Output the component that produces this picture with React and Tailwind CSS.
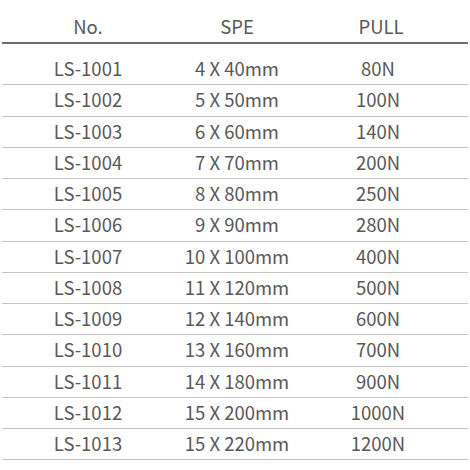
import React from 'react';

const rows = [
  ['LS-1001', '4 X 40mm', '80N'],
  ['LS-1002', '5 X 50mm', '100N'],
  ['LS-1003', '6 X 60mm', '140N'],
  ['LS-1004', '7 X 70mm', '200N'],
  ['LS-1005', '8 X 80mm', '250N'],
  ['LS-1006', '9 X 90mm', '280N'],
  ['LS-1007', '10 X 100mm', '400N'],
  ['LS-1008', '11 X 120mm', '500N'],
  ['LS-1009', '12 X 140mm', '600N'],
  ['LS-1010', '13 X 160mm', '700N'],
  ['LS-1011', '14 X 180mm', '900N'],
  ['LS-1012', '15 X 200mm', '1000N'],
  ['LS-1013', '15 X 220mm', '1200N'],
];

export default function App() {
  return (
    <div className="w-[470px] h-[470px] bg-white overflow-hidden font-['Noto_Sans_CJK_SC',sans-serif] text-[18.5px] text-[#595959]">
      <div className="mx-[2px] w-[466px]">
        {/* header */}
        <div className="grid grid-cols-[172px_126px_156px] h-[44px] pt-[14px] leading-[24px] border-b-2 border-[#6e6e6e]">
          <div className="text-center">No.</div>
          <div className="text-center">SPE</div>
          <div className="text-center pl-[6px]">PULL</div>
        </div>

        {/* body */}
        <div className="pt-[10px]">
          {rows.map((r) => (
            <div
              key={r[0]}
              className="grid grid-cols-[172px_126px_156px] h-[31.25px] items-center leading-[24px] pb-[2px] border-b border-[#c4c4c4]"
            >
              <div className="text-center">{r[0]}</div>
              <div className="text-center">{r[1]}</div>
              <div className="text-center">{r[2]}</div>
            </div>
          ))}
        </div>
      </div>
    </div>
  );
}
